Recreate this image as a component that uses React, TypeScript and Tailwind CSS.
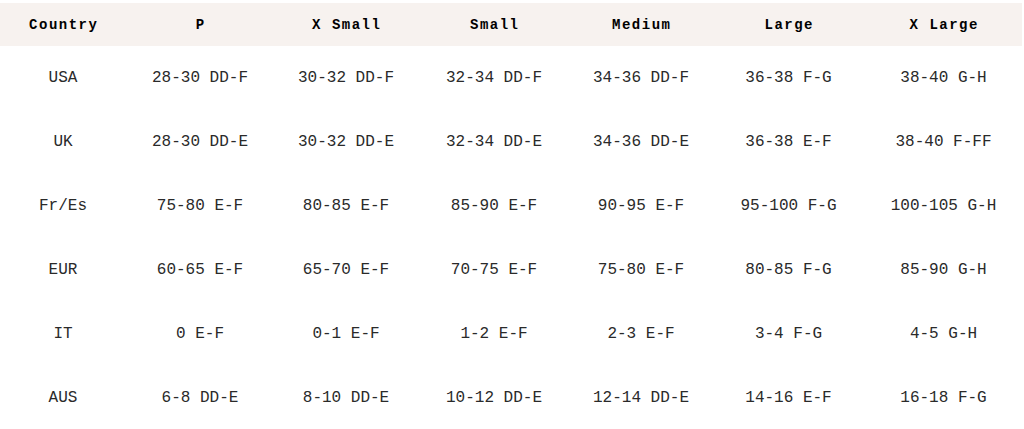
const columns = ["Country", "P", "X Small", "Small", "Medium", "Large", "X Large"];

const rows: string[][] = [
  ["USA", "28-30 DD-F", "30-32 DD-F", "32-34 DD-F", "34-36 DD-F", "36-38 F-G", "38-40 G-H"],
  ["UK", "28-30 DD-E", "30-32 DD-E", "32-34 DD-E", "34-36 DD-E", "36-38 E-F", "38-40 F-FF"],
  ["Fr/Es", "75-80 E-F", "80-85 E-F", "85-90 E-F", "90-95 E-F", "95-100 F-G", "100-105 G-H"],
  ["EUR", "60-65 E-F", "65-70 E-F", "70-75 E-F", "75-80 E-F", "80-85 F-G", "85-90 G-H"],
  ["IT", "0 E-F", "0-1 E-F", "1-2 E-F", "2-3 E-F", "3-4 F-G", "4-5 G-H"],
  ["AUS", "6-8 DD-E", "8-10 DD-E", "10-12 DD-E", "12-14 DD-E", "14-16 E-F", "16-18 F-G"],
];

const grid = "grid grid-cols-[126px_148px_144px_152px_142px_153px_157px] w-[1022px]";

export default function App() {
  return (
    <div className="w-[1024px] h-[429px] bg-white overflow-hidden pt-[3px] font-['Liberation_Mono',monospace]">
      <div className={`${grid} h-[43px] bg-[#f7f2ef] items-center pt-[2px]`}>
        {columns.map((col) => (
          <div key={col} className="text-center text-[14px] font-bold tracking-[1.5px] pl-[1.5px] text-black">
            {col}
          </div>
        ))}
      </div>
      {rows.map((row) => (
        <div key={row[0]} className={`${grid} h-[64px] items-center`}>
          {row.map((cell, i) => (
            <div key={i} className="text-center text-[16px] text-[#2a2a2a] whitespace-nowrap">
              {cell}
            </div>
          ))}
        </div>
      ))}
    </div>
  );
}
